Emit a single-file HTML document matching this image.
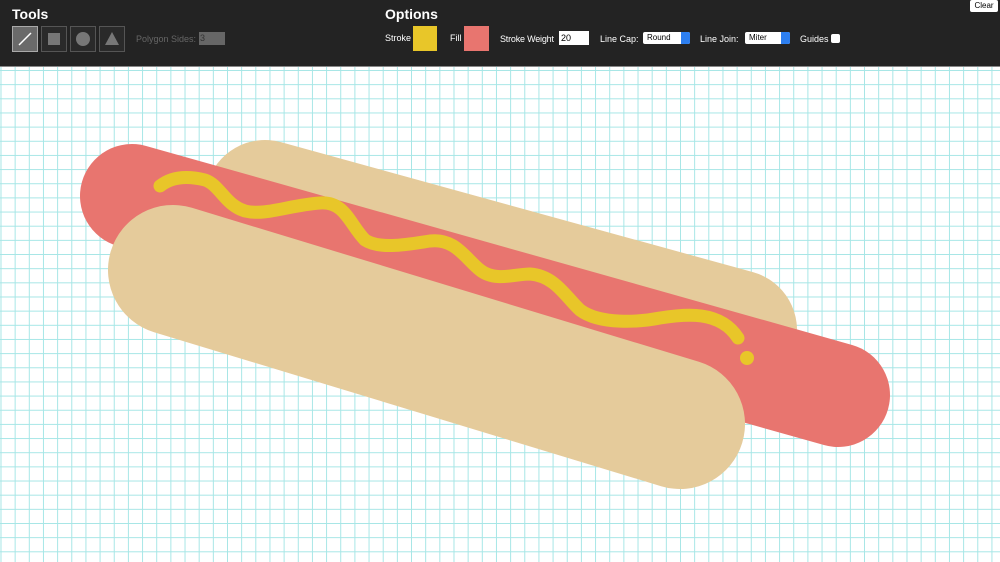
<!DOCTYPE html>
<html><head><meta charset="utf-8"><style>
body{margin:0;width:1000px;height:562px;overflow:hidden;font-family:"Liberation Sans",Arial,sans-serif;background:#fff}
.bar{position:absolute;left:0;top:0;width:1000px;height:66px;background:#232323;border-bottom:1px solid #888;color:#fff}
.canvas{position:absolute;left:0;top:67px;width:1000px;height:495px;background-color:#fff;
background-image:linear-gradient(to right,#a6e6e6 1px,transparent 1px),linear-gradient(to bottom,#a6e6e6 1px,transparent 1px);
background-size:14.17px 14.17px;background-position:0.5px 3px}
h2{position:absolute;margin:0;font-size:14px;font-weight:bold}
.tool{position:absolute;top:26px;width:24px;height:24px;border:1px solid #555;background:#2a2a2a}
.lbl{position:absolute;font-size:9px;color:#fff;white-space:nowrap}
.sel{position:absolute;top:32px;height:12px;background:#fff;border-radius:2px;font-size:8px;color:#000;line-height:12px;padding-left:4px;box-sizing:border-box}
.sel i{position:absolute;right:0;top:0;width:9px;height:12px;background:#2d7ff0;border-radius:0 2px 2px 0}
</style></head><body>
<div class="bar">
<h2 style="left:12px;top:6px">Tools</h2>
<div class="tool" style="left:12px;background:#6a6a6a;border-color:#aaa"><svg width="24" height="24"><line x1="6" y1="18" x2="18" y2="6" stroke="#fff" stroke-width="1.5"/></svg></div>
<div class="tool" style="left:41px"><div style="position:absolute;left:6px;top:6px;width:12px;height:12px;background:#777"></div></div>
<div class="tool" style="left:70px"><div style="position:absolute;left:5px;top:5px;width:14px;height:14px;border-radius:50%;background:#777"></div></div>
<div class="tool" style="left:99px"><svg width="24" height="24"><polygon points="12,5 19,18 5,18" fill="#777"/></svg></div>
<div class="lbl" style="left:136px;top:34px;color:#666">Polygon Sides:</div>
<div style="position:absolute;left:199px;top:32px;width:25px;height:13px;background:#666;font-size:9px;color:#333;line-height:13px;padding-left:1px">3</div>
<h2 style="left:385px;top:6px">Options</h2>
<div class="lbl" style="left:385px;top:33px">Stroke</div>
<div style="position:absolute;left:413px;top:26px;width:24px;height:25px;background:#e8c629"></div>
<div class="lbl" style="left:450px;top:33px">Fill</div>
<div style="position:absolute;left:464px;top:26px;width:25px;height:25px;background:#e8756f"></div>
<div class="lbl" style="left:500px;top:34px;letter-spacing:-0.2px">Stroke Weight</div>
<div style="position:absolute;left:559px;top:31px;width:30px;height:14px;background:#fff;font-size:9px;color:#000;line-height:14px;padding-left:2px;box-sizing:border-box">20</div>
<div class="lbl" style="left:600px;top:34px">Line Cap:</div>
<div class="sel" style="left:643px;width:47px">Round<i></i></div>
<div class="lbl" style="left:700px;top:34px">Line Join:</div>
<div class="sel" style="left:745px;width:45px">Miter<i></i></div>
<div class="lbl" style="left:800px;top:34px">Guides</div>
<div style="position:absolute;left:831px;top:34px;width:9px;height:9px;background:#fff;border-radius:2px"></div>
<div style="position:absolute;left:970px;top:0;width:28px;height:12px;background:#fff;border-radius:2px;color:#000;font-size:8px;line-height:12px;text-align:center">Clear</div>
</div>
<div class="canvas"></div>
<svg style="position:absolute;left:0;top:0" width="1000" height="562">
<line x1="265" y1="200" x2="737" y2="330" stroke="#e5cb9b" stroke-width="120" stroke-linecap="round"/>
<line x1="132" y1="196" x2="838" y2="395" stroke="#e8756f" stroke-width="104" stroke-linecap="round"/>
<path fill="none" stroke="#e8c629" stroke-width="13" stroke-linecap="round" stroke-linejoin="round" d="M160,186 C170,178 185,175 205,180 C220,185 225,205 245,211 C265,216 290,205 320,203 C345,201 350,225 365,240 C380,250 410,244 430,241 C455,238 465,258 480,270 C495,282 515,274 530,274 C555,276 565,296 580,310 C600,325 640,322 660,318 C685,314 720,310 738,338"/>
<circle cx="747" cy="358" r="7" fill="#e8c629"/>
<line x1="173" y1="270" x2="680" y2="424" stroke="#e5cb9b" stroke-width="130" stroke-linecap="round"/>
</svg>
</body></html>
